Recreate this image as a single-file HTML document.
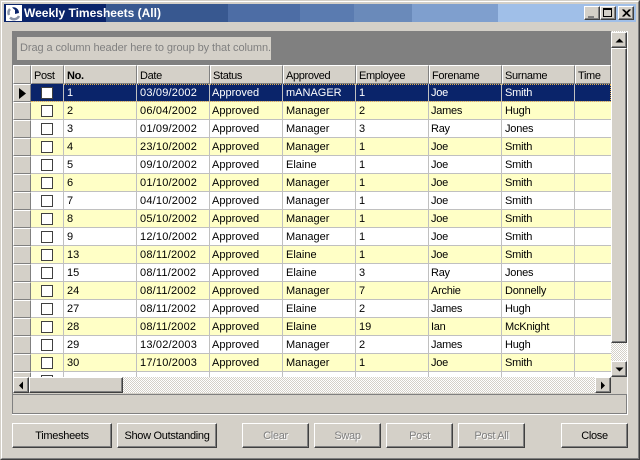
<!DOCTYPE html>
<html><head><meta charset="utf-8"><style>
html,body{margin:0;padding:0;background:#d4d0c8}
#w{position:relative;width:640px;height:460px;overflow:hidden;background:#d4d0c8;font:11px "Liberation Sans",sans-serif;color:#000}
#w div,#w span{position:absolute;box-sizing:border-box;white-space:nowrap}
.bev{background:#d4d0c8;border-top:1px solid #fff;border-left:1px solid #fff;border-right:1px solid #404040;border-bottom:1px solid #404040;box-shadow:inset -1px -1px 0 #808080}
.bar{top:4px;height:18px}
.hd{top:65px;height:19px;background:#d4d0c8;border-top:1px solid #fff;border-left:1px solid #fff;border-right:1px solid #808080;border-bottom:1px solid #808080;padding:3px 0 0 2px;line-height:14px;letter-spacing:-.35px}
.r{left:31px;width:580px;height:18px;border-bottom:1px solid #c0c0c0;line-height:19px}
.y{background:#ffffc6}.n{background:#fff}
.s{background:#0a246a;color:#fff;outline:1px dotted #e0b050;outline-offset:-1px}
.r span{top:0;height:17px;padding-left:3px;border-right:1px solid #c0c0c0}
.r span:nth-child(1){left:0;width:33px;padding:0}
.r span:nth-child(2){left:33px;width:73px}
.r span:nth-child(3){left:106px;width:73px;letter-spacing:.2px}
.r span:nth-child(4){left:179px;width:73px;padding-left:2px}
.r span:nth-child(5){left:252px;width:73px}
.r span:nth-child(6){left:325px;width:73px}
.r span:nth-child(7){left:398px;width:73px;padding-left:2px;letter-spacing:-.25px}
.r span:nth-child(8){left:471px;width:73px;letter-spacing:-.2px}
.r span:nth-child(9){left:544px;width:36px;border-right:0}
.r i{position:absolute;left:10px;top:3px;width:12px;height:12px;background:#fff;border:1px solid #404040;box-sizing:border-box}
.ind{left:13px;width:18px;height:18px;background:#d4d0c8;border-top:1px solid #fff;border-left:1px solid #fff;border-right:1px solid #808080;border-bottom:1px solid #808080}
.btn{top:423px;height:25px;text-align:center;line-height:24px;letter-spacing:-.3px}
.dis{color:#808080;text-shadow:1px 1px 0 #fff}
</style></head><body><div id="w">
<div style="left:0;top:0;width:640px;height:460px;border-top:1px solid #d4d0c8;border-left:1px solid #d4d0c8;border-right:1px solid #404040;border-bottom:1px solid #404040"></div>
<div style="left:1px;top:1px;width:638px;height:458px;border-top:1px solid #fff;border-left:1px solid #fff;border-right:1px solid #808080;border-bottom:1px solid #808080"></div>
<div class="bar" style="left:4px;width:102px;background:#0a246a"></div>
<div class="bar" style="left:106px;width:122px;background:#385890"></div>
<div class="bar" style="left:228px;width:72px;background:#4d6da5"></div>
<div class="bar" style="left:300px;width:54px;background:#5a7bb0"></div>
<div class="bar" style="left:354px;width:58px;background:#6a8aba"></div>
<div class="bar" style="left:412px;width:86px;background:#7f9fce"></div>
<div class="bar" style="left:498px;width:138px;background:#a0bfe8"></div>
<div style="left:6px;top:5px;width:16px;height:16px;background:#fff"><svg width="16" height="16" style="display:block"><path d="M3 10A5.5 5.5 0 0 1 4 4M4 12.5A5.5 5.5 0 0 0 13 11" fill="none" stroke="#8a94a8" stroke-width="2.5"/><path d="M6 2.5A5.5 5.5 0 0 1 13 8L9 9L9 5Z" fill="#0a246a"/></svg></div>
<div style="left:24px;top:5px;color:#fff;font:bold 12px/16px 'Liberation Sans',sans-serif">Weekly Timesheets (All)</div>
<div class="bev" style="left:584px;top:6px;width:16px;height:14px"><div style="left:3px;top:9px;width:6px;height:2px;background:#808080"></div></div>
<div class="bev" style="left:600px;top:6px;width:16px;height:14px"><div style="left:2px;top:1px;width:9px;height:9px;border:1px solid #000;border-top-width:2px"></div></div>
<div class="bev" style="left:618px;top:6px;width:16px;height:14px"><svg width="14" height="12" style="position:absolute;left:0;top:0"><path d="M3.5 2.5L10.5 9.5M4.5 2.5L11.5 9.5M10.5 2.5L3.5 9.5M11.5 2.5L4.5 9.5" stroke="#000" stroke-width="1" fill="none"/></svg></div>

<div style="left:12px;top:31px;width:600px;height:34px;background:#808080"></div>
<div style="left:17px;top:37px;width:254px;height:23px;background:#d4d0c8;color:#808080;padding-left:3px;line-height:23px;letter-spacing:-.08px">Drag a column header here to group by that column.</div>

<div class="hd" style="left:13px;width:18px"></div>
<div class="hd" style="left:31px;width:33px">Post</div>
<div class="hd" style="left:64px;width:73px;font-weight:bold">No.</div>
<div class="hd" style="left:137px;width:73px">Date</div>
<div class="hd" style="left:210px;width:73px">Status</div>
<div class="hd" style="left:283px;width:73px">Approved</div>
<div class="hd" style="left:356px;width:73px">Employee</div>
<div class="hd" style="left:429px;width:73px">Forename</div>
<div class="hd" style="left:502px;width:73px">Surname</div>
<div class="hd" style="left:575px;width:36px">Time</div>

<div class="ind" style="top:84px"><svg width="10" height="14" style="position:absolute;left:5px;top:2px"><path d="M0 1L7 6.5L0 12Z" fill="#000"/></svg></div>
<div class="ind" style="top:102px"></div><div class="ind" style="top:120px"></div><div class="ind" style="top:138px"></div><div class="ind" style="top:156px"></div><div class="ind" style="top:174px"></div><div class="ind" style="top:192px"></div><div class="ind" style="top:210px"></div><div class="ind" style="top:228px"></div><div class="ind" style="top:246px"></div><div class="ind" style="top:264px"></div><div class="ind" style="top:282px"></div><div class="ind" style="top:300px"></div><div class="ind" style="top:318px"></div><div class="ind" style="top:336px"></div><div class="ind" style="top:354px"></div><div class="ind" style="top:372px;height:5px;border-bottom:0"></div>

<div class="r s" style="top:84px"><span style="background:#0a246a"><i></i></span><span>1</span><span>03/09/2002</span><span>Approved</span><span>mANAGER</span><span>1</span><span>Joe</span><span>Smith</span><span></span></div>
<div class="r y" style="top:102px"><span><i></i></span><span>2</span><span>06/04/2002</span><span>Approved</span><span>Manager</span><span>2</span><span>James</span><span>Hugh</span><span></span></div>
<div class="r n" style="top:120px"><span><i></i></span><span>3</span><span>01/09/2002</span><span>Approved</span><span>Manager</span><span>3</span><span>Ray</span><span>Jones</span><span></span></div>
<div class="r y" style="top:138px"><span><i></i></span><span>4</span><span>23/10/2002</span><span>Approved</span><span>Manager</span><span>1</span><span>Joe</span><span>Smith</span><span></span></div>
<div class="r n" style="top:156px"><span><i></i></span><span>5</span><span>09/10/2002</span><span>Approved</span><span>Elaine</span><span>1</span><span>Joe</span><span>Smith</span><span></span></div>
<div class="r y" style="top:174px"><span><i></i></span><span>6</span><span>01/10/2002</span><span>Approved</span><span>Manager</span><span>1</span><span>Joe</span><span>Smith</span><span></span></div>
<div class="r n" style="top:192px"><span><i></i></span><span>7</span><span>04/10/2002</span><span>Approved</span><span>Manager</span><span>1</span><span>Joe</span><span>Smith</span><span></span></div>
<div class="r y" style="top:210px"><span><i></i></span><span>8</span><span>05/10/2002</span><span>Approved</span><span>Manager</span><span>1</span><span>Joe</span><span>Smith</span><span></span></div>
<div class="r n" style="top:228px"><span><i></i></span><span>9</span><span>12/10/2002</span><span>Approved</span><span>Manager</span><span>1</span><span>Joe</span><span>Smith</span><span></span></div>
<div class="r y" style="top:246px"><span><i></i></span><span>13</span><span>08/11/2002</span><span>Approved</span><span>Elaine</span><span>1</span><span>Joe</span><span>Smith</span><span></span></div>
<div class="r n" style="top:264px"><span><i></i></span><span>15</span><span>08/11/2002</span><span>Approved</span><span>Elaine</span><span>3</span><span>Ray</span><span>Jones</span><span></span></div>
<div class="r y" style="top:282px"><span><i></i></span><span>24</span><span>08/11/2002</span><span>Approved</span><span>Manager</span><span>7</span><span>Archie</span><span>Donnelly</span><span></span></div>
<div class="r n" style="top:300px"><span><i></i></span><span>27</span><span>08/11/2002</span><span>Approved</span><span>Elaine</span><span>2</span><span>James</span><span>Hugh</span><span></span></div>
<div class="r y" style="top:318px"><span><i></i></span><span>28</span><span>08/11/2002</span><span>Approved</span><span>Elaine</span><span>19</span><span>Ian</span><span>McKnight</span><span></span></div>
<div class="r n" style="top:336px"><span><i></i></span><span>29</span><span>13/02/2003</span><span>Approved</span><span>Manager</span><span>2</span><span>James</span><span>Hugh</span><span></span></div>
<div class="r y" style="top:354px"><span><i></i></span><span>30</span><span>17/10/2003</span><span>Approved</span><span>Manager</span><span>1</span><span>Joe</span><span>Smith</span><span></span></div>
<div class="r n" style="top:372px;height:5px;overflow:hidden;border-bottom:0"><span><i></i></span><span></span><span></span><span></span><span></span><span></span><span></span><span></span><span></span></div>

<div style="left:611px;top:31px;width:16px;height:346px;background:repeating-conic-gradient(#fff 0 25%,#d4d0c8 0 50%) 0 0/2px 2px"></div>
<div class="bev" style="left:611px;top:32px;width:16px;height:16px"><svg width="12" height="12" style="position:absolute;left:1px;top:1px"><path d="M2.5 8.5H10.5L6.5 4.5Z" fill="#000"/></svg></div>
<div class="bev" style="left:611px;top:48px;width:16px;height:295px"></div>
<div class="bev" style="left:611px;top:361px;width:16px;height:16px"><svg width="12" height="12" style="position:absolute;left:1px;top:1px"><path d="M2.5 4.5H10.5L6.5 8.5Z" fill="#000"/></svg></div>

<div style="left:13px;top:377px;width:598px;height:16px;background:repeating-conic-gradient(#fff 0 25%,#d4d0c8 0 50%) 0 0/2px 2px"></div>
<div class="bev" style="left:13px;top:377px;width:16px;height:16px"><svg width="12" height="12" style="position:absolute;left:1px;top:1px"><path d="M8 2.5V10.5L4 6.5Z" fill="#000"/></svg></div>
<div class="bev" style="left:29px;top:377px;width:94px;height:16px"></div>
<div class="bev" style="left:595px;top:377px;width:16px;height:16px"><svg width="12" height="12" style="position:absolute;left:1px;top:1px"><path d="M4 2.5V10.5L8 6.5Z" fill="#000"/></svg></div>

<div style="left:12px;top:65px;width:1px;height:329px;background:#808080"></div>
<div style="left:627px;top:31px;width:1px;height:384px;background:#fff"></div>
<div style="left:12px;top:394px;width:615px;height:20px;border:1px solid #808080"></div>
<div style="left:12px;top:414px;width:616px;height:1px;background:#fff"></div>

<div class="bev btn" style="left:12px;width:100px">Timesheets</div>
<div class="bev btn" style="left:117px;width:100px">Show Outstanding</div>
<div class="bev btn dis" style="left:242px;width:67px">Clear</div>
<div class="bev btn dis" style="left:314px;width:67px">Swap</div>
<div class="bev btn dis" style="left:386px;width:67px">Post</div>
<div class="bev btn dis" style="left:458px;width:67px">Post All</div>
<div class="bev btn" style="left:561px;width:67px">Close</div>
</div></body></html>
